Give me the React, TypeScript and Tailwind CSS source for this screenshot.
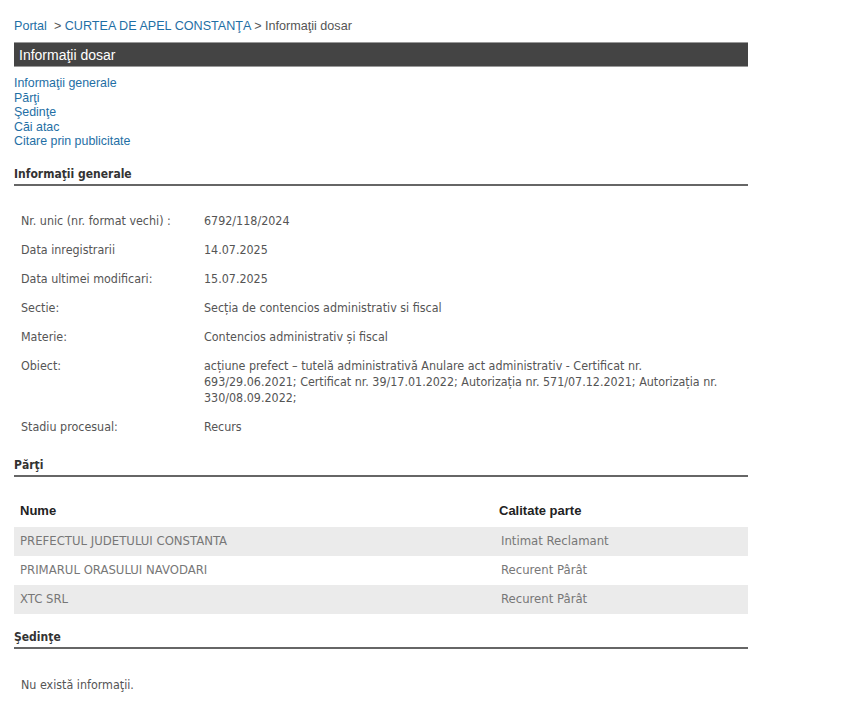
import React from 'react';

const tahoma = { fontFamily: '"DejaVu Sans Condensed", "DejaVu Sans", sans-serif' };

const generalInfo: [string, React.ReactNode][] = [
  ['Nr. unic (nr. format vechi) :', '6792/118/2024'],
  ['Data inregistrarii', '14.07.2025'],
  ['Data ultimei modificari:', '15.07.2025'],
  ['Sectie:', 'Secția de contencios administrativ si fiscal'],
  ['Materie:', 'Contencios administrativ și fiscal'],
  [
    'Obiect:',
    <>
      <span className="block whitespace-nowrap">
        acțiune prefect – tutelă administrativă Anulare act administrativ - Certificat nr.
      </span>
      <span className="block whitespace-nowrap">
        693/29.06.2021; Certificat nr. 39/17.01.2022; Autorizația nr. 571/07.12.2021; Autorizația nr.
      </span>
      <span className="block whitespace-nowrap">330/08.09.2022;</span>
    </>,
  ],
  ['Stadiu procesual:', 'Recurs'],
];

const parti = [
  { nume: 'PREFECTUL JUDETULUI CONSTANTA', calitate: 'Intimat Reclamant' },
  { nume: 'PRIMARUL ORASULUI NAVODARI', calitate: 'Recurent Pârât' },
  { nume: 'XTC SRL', calitate: 'Recurent Pârât' },
];

const SectionTitle = ({ title }: { title: string }) => (
  <div className="border-b-2 border-[#666] pb-[2px]">
    <h3 className="text-[12px] font-bold leading-[16px] text-[#333]" style={tahoma}>
      {title}
    </h3>
  </div>
);

export default function App() {
  return (
    <div className="min-h-screen bg-white" style={{ fontFamily: '"Liberation Sans", Arial, sans-serif' }}>
      <div className="w-[734px] ml-[14px] pt-[18px]">
        {/* Breadcrumb */}
        <div className="text-[12.6px] leading-[16px] text-[#555]">
          <a className="text-[#1f6fa5]">Portal</a>
          <span>&nbsp; &gt; </span>
          <a className="text-[#1f6fa5]">CURTEA DE APEL CONSTANŢA</a>
          <span> &gt; Informaţii dosar</span>
        </div>

        {/* Title bar */}
        <div className="mt-[8px] h-[25px] bg-[#444] border-y border-[#999] px-[5px] flex items-center">
          <span className="text-[14px] text-white leading-none">Informaţii dosar</span>
        </div>

        {/* Anchor links */}
        <div className="mt-[9px] flex flex-col text-[12.4px] leading-[14.5px] text-[#1f6fa5]">
          <a>Informaţii generale</a>
          <a>Părţi</a>
          <a>Şedinţe</a>
          <a>Căi atac</a>
          <a>Citare prin publicitate</a>
        </div>

        {/* General info */}
        <div className="mt-[17px]">
          <SectionTitle title="Informaţii generale" />
          <div className="mt-[27px] pl-[7px] flex flex-col gap-[13px] text-[12.4px] leading-[16px] text-[#555]" style={tahoma}>
            {generalInfo.map(([label, value]) => (
              <div key={label} className="flex">
                <div className="w-[183px] shrink-0">{label}</div>
                <div className="flex-1">{value}</div>
              </div>
            ))}
          </div>
        </div>

        {/* Parti */}
        <div className="mt-[22px]">
          <SectionTitle title="Părţi" />
          <table className="mt-[18px] w-full border-collapse text-[13px]">
            <thead>
              <tr className="h-[32px] text-left text-[#222]">
                <th className="pl-[6px] font-bold">Nume</th>
                <th className="w-[249px] font-bold">Calitate parte</th>
              </tr>
            </thead>
            <tbody style={tahoma} className="text-[#777]">
              {parti.map((p, i) => (
                <tr key={p.nume} className={`h-[29px] ${i % 2 === 0 ? 'bg-[#ebebeb]' : 'bg-white'}`}>
                  <td className="pl-[6px]">{p.nume}</td>
                  <td className="pl-[2px]">{p.calitate}</td>
                </tr>
              ))}
            </tbody>
          </table>
        </div>

        {/* Sedinte */}
        <div className="mt-[15px]">
          <SectionTitle title="Şedinţe" />
          <p className="mt-[28px] pl-[7px] text-[12.4px] leading-[16px] text-[#555]" style={tahoma}>
            Nu există informaţii.
          </p>
        </div>
      </div>
    </div>
  );
}
